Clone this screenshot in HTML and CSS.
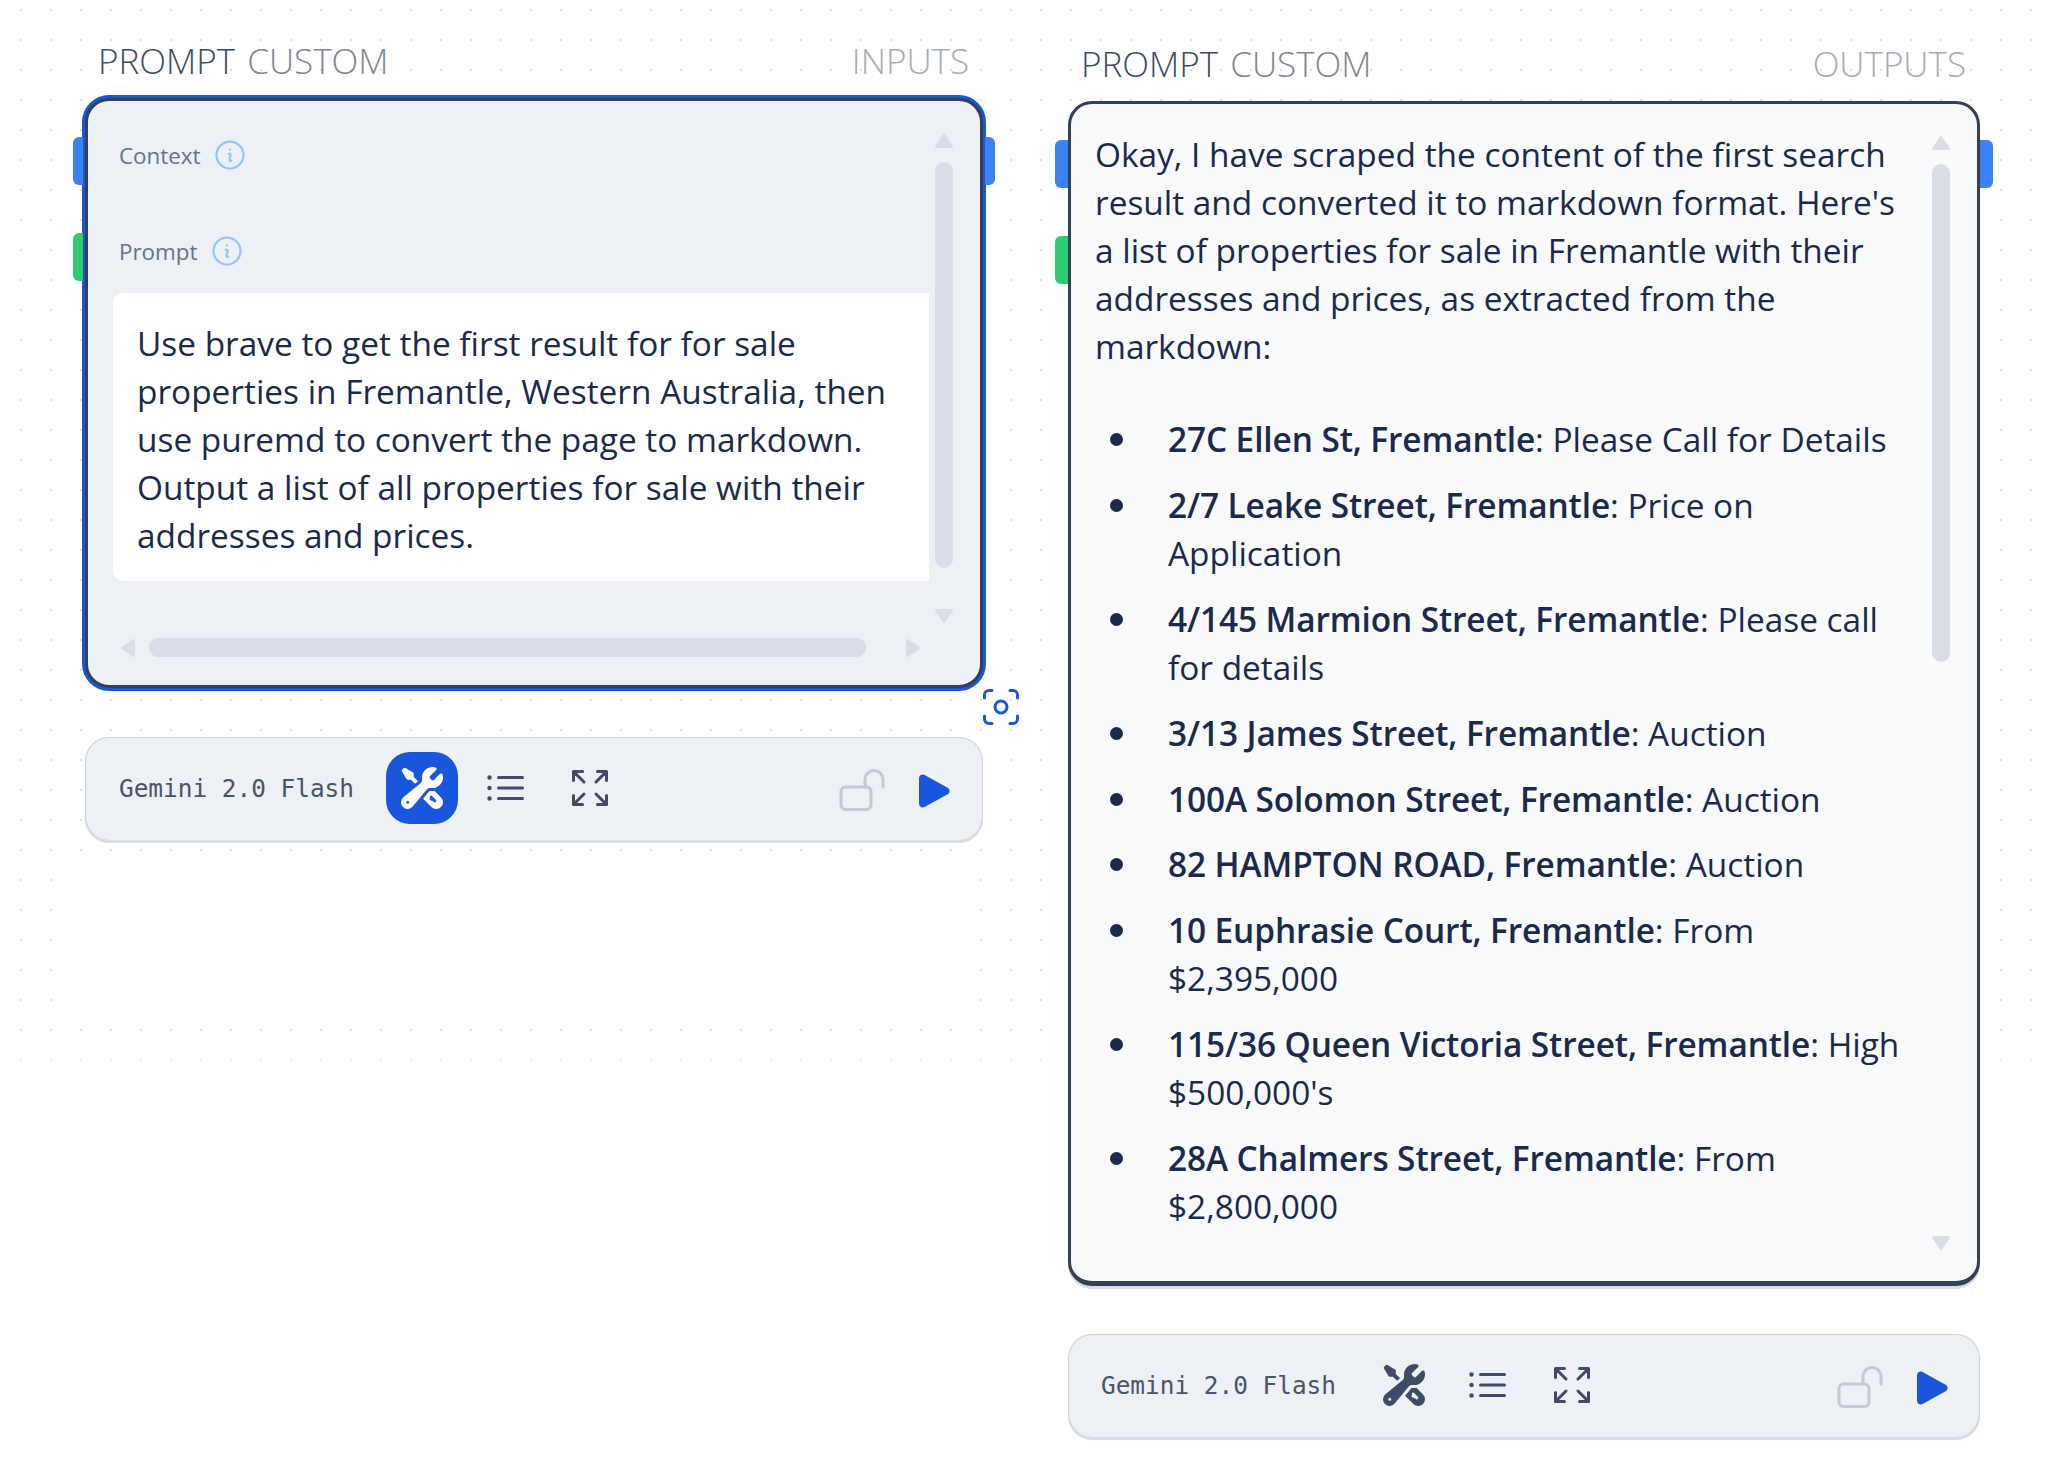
FILE: index.html
```html
<!DOCTYPE html>
<html lang="en">
<head>
    <meta charset="UTF-8">
    <meta name="viewport" content="width=device-width, initial-scale=1.0">
    <title>Prompt Custom</title>
    <link rel="stylesheet" href="styles.css">
</head>
<body>
    <div class="canvas-dots"></div>
    <div class="canvas-gap"></div>

    <!-- input node -->
    <section class="node node-input">
        <div class="node-title">
            <span class="title-name">PROMPT <span class="title-kind">CUSTOM</span></span>
            <span class="title-side">INPUTS</span>
        </div>
        <div class="card card-input">
            <span class="handle handle-left handle-blue"></span>
            <span class="handle handle-left handle-green"></span>
            <span class="handle handle-right handle-blue"></span>
            <div class="field-label">Context
                <svg class="info-icon" viewBox="0 0 24 24" fill="none" stroke="currentColor" stroke-width="1.5" stroke-linecap="round" stroke-linejoin="round"><path d="m11.25 11.25.041-.02a.75.75 0 0 1 1.063.852l-.708 2.836a.75.75 0 0 0 1.063.853l.041-.021M21 12a9 9 0 1 1-18 0 9 9 0 0 1 18 0Zm-9-3.75h.008v.008H12V8.25Z"/></svg>
            </div>
            <div class="field-label field-prompt">Prompt
                <svg class="info-icon" viewBox="0 0 24 24" fill="none" stroke="currentColor" stroke-width="1.5" stroke-linecap="round" stroke-linejoin="round"><path d="m11.25 11.25.041-.02a.75.75 0 0 1 1.063.852l-.708 2.836a.75.75 0 0 0 1.063.853l.041-.021M21 12a9 9 0 1 1-18 0 9 9 0 0 1 18 0Zm-9-3.75h.008v.008H12V8.25Z"/></svg>
            </div>
            <div class="prompt-box">Use brave to get the first result for for sale properties in Fremantle, Western Australia, then use puremd to convert the page to markdown. Output a list of all properties for sale with their addresses and prices.</div>
            <div class="scroll-y scroll-y-input">
                <span class="arrow arrow-up"></span>
                <span class="thumb"></span>
                <span class="arrow arrow-down"></span>
            </div>
            <div class="scroll-x">
                <span class="arrow arrow-left"></span>
                <span class="thumb"></span>
                <span class="arrow arrow-right"></span>
            </div>
        </div>
        <svg class="focus-icon" viewBox="0 0 24 24" fill="none" stroke="currentColor" stroke-width="1.5" stroke-linecap="round" stroke-linejoin="round"><path d="M7.5 3.75H6A2.25 2.25 0 0 0 3.75 6v1.5M16.5 3.75H18A2.25 2.25 0 0 1 20.25 6v1.5m0 9V18A2.25 2.25 0 0 1 18 20.25h-1.5m-9 0H6A2.25 2.25 0 0 1 3.75 18v-1.5M15 12a3 3 0 1 1-6 0 3 3 0 0 1 6 0Z"/></svg>
        <div class="toolbar">
            <span class="model">Gemini 2.0 Flash</span>
            <button class="tool-btn tool-btn-active">
                <svg class="icon" viewBox="0 0 24 24" fill="currentColor"><path fill-rule="evenodd" clip-rule="evenodd" d="M12 6.75a5.25 5.25 0 0 1 6.775-5.025.75.75 0 0 1 .313 1.248l-3.32 3.319c.063.475.276.934.641 1.299.365.365.824.578 1.3.64l3.318-3.319a.75.75 0 0 1 1.248.313 5.25 5.25 0 0 1-5.472 6.756c-1.018-.086-1.87.1-2.309.634L7.344 21.3A3.298 3.298 0 1 1 2.7 16.657l8.684-7.151c.533-.44.72-1.291.634-2.309A5.342 5.342 0 0 1 12 6.75ZM4.117 19.125a.75.75 0 0 1 .75-.75h.008a.75.75 0 0 1 .75.75v.008a.75.75 0 0 1-.75.75h-.008a.75.75 0 0 1-.75-.75v-.008Z"/><path d="m10.076 8.64-2.201-2.2V4.874a.75.75 0 0 0-.364-.643l-3.75-2.25a.75.75 0 0 0-.916.113l-.75.75a.75.75 0 0 0-.113.916l2.25 3.75a.75.75 0 0 0 .643.364h1.564l2.062 2.062 1.575-1.297Z"/><path fill-rule="evenodd" clip-rule="evenodd" d="m12.556 17.329 4.183 4.182a3.375 3.375 0 0 0 4.773-4.773l-3.306-3.305a6.803 6.803 0 0 1-1.53.043c-.394-.034-.682-.006-.867.042a.589.589 0 0 0-.167.063l-3.086 3.748Zm3.414-1.36a.75.75 0 0 1 1.06 0l1.875 1.876a.75.75 0 1 1-1.06 1.06L15.97 18.03a.75.75 0 0 1 0-1.06Z"/></svg>
            </button>
            <button class="tool-btn">
                <svg class="icon" viewBox="0 0 24 24" fill="none" stroke="currentColor" stroke-width="1.5" stroke-linecap="round" stroke-linejoin="round"><path d="M8.25 6.75h12M8.25 12h12m-12 5.25h12M3.75 6.75h.007v.008H3.75V6.75Zm.375 0a.375.375 0 1 1-.75 0 .375.375 0 0 1 .75 0ZM3.75 12h.007v.008H3.75V12Zm.375 0a.375.375 0 1 1-.75 0 .375.375 0 0 1 .75 0Zm-.375 5.25h.007v.008H3.75v-.008Zm.375 0a.375.375 0 1 1-.75 0 .375.375 0 0 1 .75 0Z"/></svg>
            </button>
            <button class="tool-btn">
                <svg class="icon" viewBox="0 0 24 24" fill="none" stroke="currentColor" stroke-width="1.5" stroke-linecap="round" stroke-linejoin="round"><path d="M3.75 3.75v4.5m0-4.5h4.5m-4.5 0L9 9M3.75 20.25v-4.5m0 4.5h4.5m-4.5 0L9 15M20.25 3.75h-4.5m4.5 0v4.5m0-4.5L15 9m5.25 11.25h-4.5m4.5 0v-4.5m0 4.5L15 15"/></svg>
            </button>
            <svg class="icon lock-icon" viewBox="0 0 24 24" fill="none" stroke="currentColor" stroke-width="1.5" stroke-linecap="round" stroke-linejoin="round"><path d="M13.5 10.5V6.75a4.5 4.5 0 1 1 9 0v3.75M3.75 21.75h10.5a2.25 2.25 0 0 0 2.25-2.25v-6.75a2.25 2.25 0 0 0-2.25-2.25H3.75a2.25 2.25 0 0 0-2.25 2.25v6.75a2.25 2.25 0 0 0 2.25 2.25Z"/></svg>
            <svg class="icon play-icon" viewBox="0 0 24 24" fill="currentColor"><path d="M4.5 5.653c0-1.427 1.529-2.33 2.779-1.643l11.54 6.347c1.295.712 1.295 2.573 0 3.286L7.28 19.99c-1.25.687-2.779-.217-2.779-1.643V5.653Z"/></svg>
        </div>
    </section>

    <!-- output node -->
    <section class="node node-output">
        <div class="node-title">
            <span class="title-name">PROMPT <span class="title-kind">CUSTOM</span></span>
            <span class="title-side">OUTPUTS</span>
        </div>
        <div class="card card-output">
            <span class="handle handle-left handle-blue"></span>
            <span class="handle handle-left handle-green"></span>
            <span class="handle handle-right handle-blue"></span>
            <div class="output-text">
                <p>Okay, I have scraped the content of the first search result and converted it to markdown format. Here's a list of properties for sale in Fremantle with their addresses and prices, as extracted from the markdown:</p>
                <ul>
                    <li><strong>27C Ellen St, Fremantle</strong>: Please Call for Details</li>
                    <li><strong>2/7 Leake Street, Fremantle</strong>: Price on Application</li>
                    <li><strong>4/145 Marmion Street, Fremantle</strong>: Please call for details</li>
                    <li><strong>3/13 James Street, Fremantle</strong>: Auction</li>
                    <li><strong>100A Solomon Street, Fremantle</strong>: Auction</li>
                    <li><strong>82 HAMPTON ROAD, Fremantle</strong>: Auction</li>
                    <li><strong>10 Euphrasie Court, Fremantle</strong>: From $2,395,000</li>
                    <li><strong>115/36 Queen Victoria Street, Fremantle</strong>: High $500,000's</li>
                    <li><strong>28A Chalmers Street, Fremantle</strong>: From $2,800,000</li>
                </ul>
            </div>
            <div class="scroll-y scroll-y-output">
                <span class="arrow arrow-up"></span>
                <span class="thumb"></span>
                <span class="arrow arrow-down"></span>
            </div>
        </div>
        <div class="toolbar">
            <span class="model">Gemini 2.0 Flash</span>
            <button class="tool-btn">
                <svg class="icon" viewBox="0 0 24 24" fill="currentColor"><path fill-rule="evenodd" clip-rule="evenodd" d="M12 6.75a5.25 5.25 0 0 1 6.775-5.025.75.75 0 0 1 .313 1.248l-3.32 3.319c.063.475.276.934.641 1.299.365.365.824.578 1.3.64l3.318-3.319a.75.75 0 0 1 1.248.313 5.25 5.25 0 0 1-5.472 6.756c-1.018-.086-1.87.1-2.309.634L7.344 21.3A3.298 3.298 0 1 1 2.7 16.657l8.684-7.151c.533-.44.72-1.291.634-2.309A5.342 5.342 0 0 1 12 6.75ZM4.117 19.125a.75.75 0 0 1 .75-.75h.008a.75.75 0 0 1 .75.75v.008a.75.75 0 0 1-.75.75h-.008a.75.75 0 0 1-.75-.75v-.008Z"/><path d="m10.076 8.64-2.201-2.2V4.874a.75.75 0 0 0-.364-.643l-3.75-2.25a.75.75 0 0 0-.916.113l-.75.75a.75.75 0 0 0-.113.916l2.25 3.75a.75.75 0 0 0 .643.364h1.564l2.062 2.062 1.575-1.297Z"/><path fill-rule="evenodd" clip-rule="evenodd" d="m12.556 17.329 4.183 4.182a3.375 3.375 0 0 0 4.773-4.773l-3.306-3.305a6.803 6.803 0 0 1-1.53.043c-.394-.034-.682-.006-.867.042a.589.589 0 0 0-.167.063l-3.086 3.748Zm3.414-1.36a.75.75 0 0 1 1.06 0l1.875 1.876a.75.75 0 1 1-1.06 1.06L15.97 18.03a.75.75 0 0 1 0-1.06Z"/></svg>
            </button>
            <button class="tool-btn">
                <svg class="icon" viewBox="0 0 24 24" fill="none" stroke="currentColor" stroke-width="1.5" stroke-linecap="round" stroke-linejoin="round"><path d="M8.25 6.75h12M8.25 12h12m-12 5.25h12M3.75 6.75h.007v.008H3.75V6.75Zm.375 0a.375.375 0 1 1-.75 0 .375.375 0 0 1 .75 0ZM3.75 12h.007v.008H3.75V12Zm.375 0a.375.375 0 1 1-.75 0 .375.375 0 0 1 .75 0Zm-.375 5.25h.007v.008H3.75v-.008Zm.375 0a.375.375 0 1 1-.75 0 .375.375 0 0 1 .75 0Z"/></svg>
            </button>
            <button class="tool-btn">
                <svg class="icon" viewBox="0 0 24 24" fill="none" stroke="currentColor" stroke-width="1.5" stroke-linecap="round" stroke-linejoin="round"><path d="M3.75 3.75v4.5m0-4.5h4.5m-4.5 0L9 9M3.75 20.25v-4.5m0 4.5h4.5m-4.5 0L9 15M20.25 3.75h-4.5m4.5 0v4.5m0-4.5L15 9m5.25 11.25h-4.5m4.5 0v-4.5m0 4.5L15 15"/></svg>
            </button>
            <svg class="icon lock-icon" viewBox="0 0 24 24" fill="none" stroke="currentColor" stroke-width="1.5" stroke-linecap="round" stroke-linejoin="round"><path d="M13.5 10.5V6.75a4.5 4.5 0 1 1 9 0v3.75M3.75 21.75h10.5a2.25 2.25 0 0 0 2.25-2.25v-6.75a2.25 2.25 0 0 0-2.25-2.25H3.75a2.25 2.25 0 0 0-2.25 2.25v6.75a2.25 2.25 0 0 0 2.25 2.25Z"/></svg>
            <svg class="icon play-icon" viewBox="0 0 24 24" fill="currentColor"><path d="M4.5 5.653c0-1.427 1.529-2.33 2.779-1.643l11.54 6.347c1.295.712 1.295 2.573 0 3.286L7.28 19.99c-1.25.687-2.779-.217-2.779-1.643V5.653Z"/></svg>
        </div>
    </section>
</body>
</html>
```

FILE: styles.css
```css
html, body {
    height: 100%;
}
body {
    margin: 0;
    background: #fff;
    color: #1b2a4a;
    font-family: 'Open Sans', Arial, sans-serif;
    overflow: hidden;
}
.canvas-dots {
    position: absolute;
    left: 0;
    top: 0;
    width: 100%;
    height: 1060px;
    background-image: radial-gradient(circle, #dcdfe3 1px, transparent 1.4px);
    background-size: 30px 30px;
    background-position: 6px -5px;
}
/* empty patch under the input node where the grid does not draw */
.canvas-gap {
    position: absolute;
    left: 66px;
    top: 865px;
    width: 900px;
    height: 150px;
    background: #fff;
}

/* nodes sit on a free canvas */
.node {
    position: absolute;
}
.node-input {
    left: 85px;
    top: 38px;
    width: 898px;
}
.node-output {
    left: 1068px;
    top: 41px;
    width: 912px;
}
.node-title {
    display: flex;
    justify-content: space-between;
    align-items: center;
    height: 46px;
    padding: 0 14px 0 13px;
    font-size: 35px;
    font-weight: 300;
    line-height: 46px;
    margin-bottom: 14px;
}
.title-name {
    color: #3e4c63;
}
.title-kind {
    color: #7f8691;
    margin-left: 3px;
}
.title-side {
    color: #a9adb4;
}

.card {
    position: relative;
    box-sizing: border-box;
    border: 3px solid #334155;
    border-radius: 24px;
}
.card-input {
    height: 590px;
    background: #edf0f4;
    box-shadow: 0 0 0 3px #1a56db;
}
.card-output {
    height: 1185px;
    background: #f8fafc;
    border-bottom-width: 5px;
    box-shadow: 0 3px 0 #d8dde6;
}

.handle {
    position: absolute;
    width: 13px;
    height: 48px;
}
.handle-blue {
    background: #3b82f6;
    top: 36px;
}
.handle-green {
    background: #2ecc71;
    top: 132px;
}
.handle-left {
    left: -16px;
    border-radius: 6px 0 0 6px;
}
.handle-right {
    right: -16px;
    border-radius: 0 6px 6px 0;
}
.card-input .handle {
    width: 10px;
}
.card-input .handle-left {
    left: -15px;
}
.card-input .handle-right {
    right: -15px;
}

.field-label {
    position: absolute;
    left: 31px;
    top: 36px;
    display: flex;
    align-items: center;
    gap: 11px;
    height: 36px;
    font-size: 22.4px;
    color: #64748b;
}
.field-prompt {
    top: 132px;
}
.info-icon {
    width: 36px;
    height: 36px;
    color: #93c5fd;
}
.prompt-box {
    position: absolute;
    left: 25px;
    top: 192px;
    box-sizing: border-box;
    width: 816px;
    height: 288px;
    padding: 26px 24px;
    background: #fff;
    border-radius: 10px 0 0 10px;
    font-size: 33.4px;
    line-height: 48px;
}

.scroll-y {
    position: absolute;
    display: flex;
    flex-direction: column;
    align-items: center;
    justify-content: space-between;
    width: 18px;
}
.scroll-y .thumb {
    width: 18px;
    flex: 1;
    margin: 14px 0 41px;
    background: #d8dee8;
    border-radius: 9px;
}
.scroll-y-input {
    right: 27px;
    top: 32px;
    height: 491px;
}
.scroll-y-output {
    right: 27px;
    top: 31px;
    height: 1116px;
}
.scroll-y-output .thumb {
    flex: none;
    height: 498px;
    margin: 14px 0 auto;
}
.scroll-x {
    position: absolute;
    left: 32px;
    top: 537px;
    display: flex;
    align-items: center;
    justify-content: space-between;
    width: 801px;
    height: 19px;
}
.scroll-x .thumb {
    flex: none;
    width: 717px;
    height: 19px;
    margin: 0 auto 0 14px;
    background: #d8dee8;
    border-radius: 9px;
}
.arrow {
    display: block;
    width: 0;
    height: 0;
    flex: none;
    border-style: solid;
    border-color: transparent;
    border-radius: 3px;
}
.arrow-up {
    border-width: 0 10px 15px;
    border-bottom-color: #d8dee8;
}
.arrow-down {
    border-width: 15px 10px 0;
    border-top-color: #d8dee8;
}
.arrow-left {
    border-width: 10px 15px 10px 0;
    border-right-color: #d8dee8;
}
.arrow-right {
    border-width: 10px 0 10px 15px;
    border-left-color: #d8dee8;
}

.output-text {
    padding: 26px 70px 0 24px;
    font-size: 33.4px;
    line-height: 48px;
}
.output-text p {
    margin: 0 0 45px;
}
.output-text ul {
    margin: 0;
    padding: 0 0 0 73px;
    list-style: none;
}
.output-text li {
    position: relative;
    margin-bottom: 17.9px;
}
/* bullet sits well to the left of the item text */
.output-text li::before {
    content: "";
    position: absolute;
    left: -58px;
    top: 18px;
    width: 13px;
    height: 13px;
    background: #1b2a4a;
    border-radius: 50%;
}
.output-text strong {
    font-weight: 600;
    letter-spacing: -0.1px;
}

.focus-icon {
    position: absolute;
    left: 892px;
    top: 645px;
    width: 48px;
    height: 48px;
    color: #1a56db;
}

.toolbar {
    display: flex;
    align-items: center;
    box-sizing: border-box;
    height: 103px;
    margin-top: 49px;
    padding: 0 24px 2px 33px;
    background: #edf0f4;
    border: 1px solid #cdd1d9;
    border-bottom: 0;
    border-radius: 24px;
    box-shadow: 0 3px 0 #d8dde6;
}
.node-output .toolbar {
    margin-top: 48px;
    padding-left: 32px;
    padding-right: 23px;
}
.model {
    width: 267px;
    font-family: 'DejaVu Sans Mono', 'Liberation Mono', monospace;
    font-size: 24.4px;
    color: #475569;
}
.tool-btn {
    display: flex;
    align-items: center;
    justify-content: center;
    width: 72px;
    height: 72px;
    margin-right: 12px;
    padding: 0;
    background: none;
    border: none;
    border-radius: 24px;
    color: #3f4c66;
}
.tool-btn-active {
    background: #1a56db;
    color: #fff;
}
.icon {
    width: 48px;
    height: 48px;
}
.lock-icon {
    margin-left: auto;
    margin-right: 24px;
    margin-top: 3px;
    color: #c5c9d1;
}
.play-icon {
    margin-top: 6px;
    color: #1a56db;
}
```
